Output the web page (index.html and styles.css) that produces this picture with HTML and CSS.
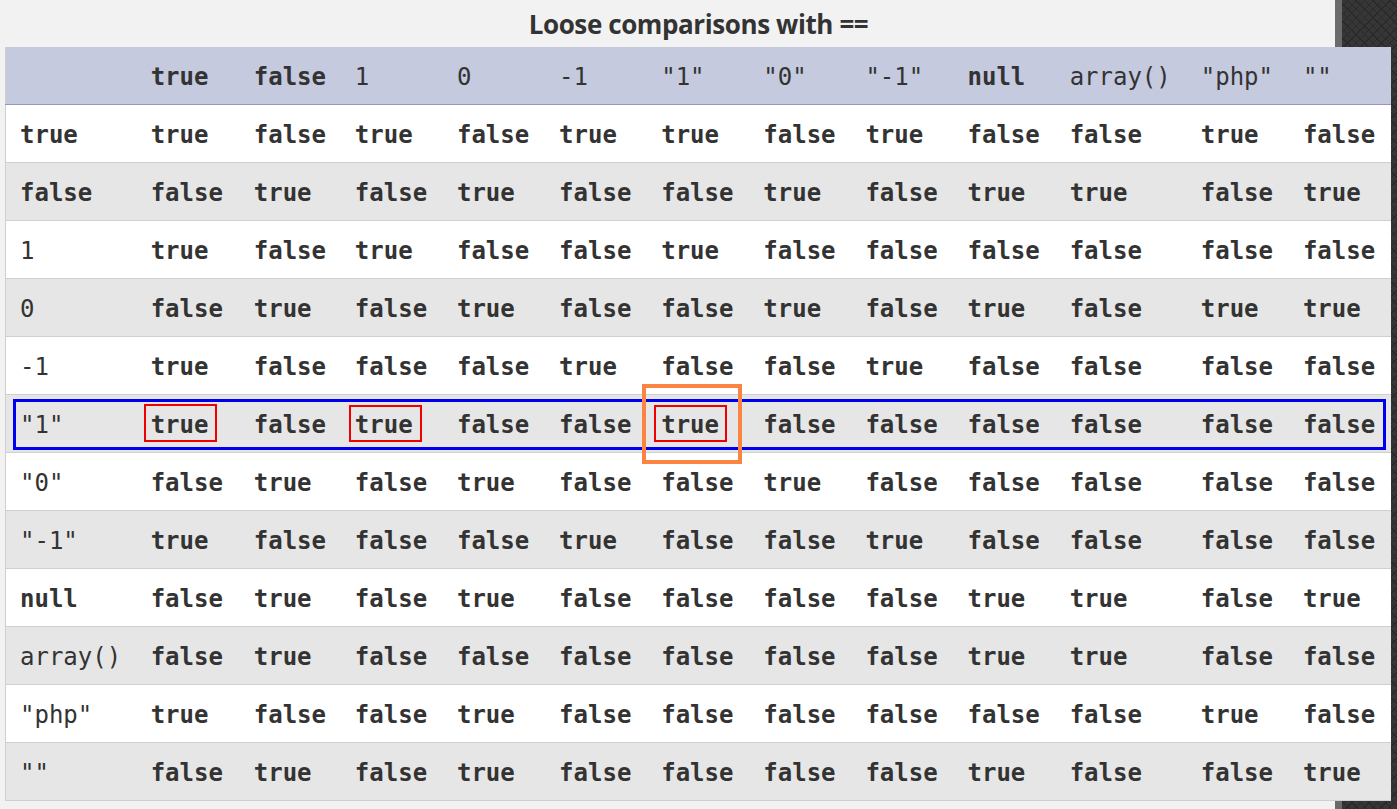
FILE: index.html
```html
<!DOCTYPE html>
<html>
<head>
<meta charset="utf-8">
<link rel="stylesheet" href="styles.css">
</head>
<body>
<div class="page">
  <h1 class="title">Loose comparisons with ==</h1>
  <table class="cmp">
    <colgroup>
      <col class="c-wide"><col class="c1"><col class="c2"><col class="c3"><col class="c"><col class="c"><col class="c"><col class="c"><col class="c"><col class="c"><col class="c-wide"><col class="c"><col class="c">
    </colgroup>
    <thead>
      <tr>
        <th></th><th class="kw">true</th><th class="kw">false</th><th>1</th><th>0</th><th>-1</th><th>"1"</th><th>"0"</th><th>"-1"</th><th class="kw">null</th><th>array()</th><th>"php"</th><th>""</th>
      </tr>
    </thead>
    <tbody>
      <tr><th class="kw">true</th><td>true</td><td>false</td><td>true</td><td>false</td><td>true</td><td>true</td><td>false</td><td>true</td><td>false</td><td>false</td><td>true</td><td>false</td></tr>
      <tr><th class="kw">false</th><td>false</td><td>true</td><td>false</td><td>true</td><td>false</td><td>false</td><td>true</td><td>false</td><td>true</td><td>true</td><td>false</td><td>true</td></tr>
      <tr><th>1</th><td>true</td><td>false</td><td>true</td><td>false</td><td>false</td><td>true</td><td>false</td><td>false</td><td>false</td><td>false</td><td>false</td><td>false</td></tr>
      <tr><th>0</th><td>false</td><td>true</td><td>false</td><td>true</td><td>false</td><td>false</td><td>true</td><td>false</td><td>true</td><td>false</td><td>true</td><td>true</td></tr>
      <tr><th>-1</th><td>true</td><td>false</td><td>false</td><td>false</td><td>true</td><td>false</td><td>false</td><td>true</td><td>false</td><td>false</td><td>false</td><td>false</td></tr>
      <tr><th>"1"</th><td>true</td><td>false</td><td>true</td><td>false</td><td>false</td><td>true</td><td>false</td><td>false</td><td>false</td><td>false</td><td>false</td><td>false</td></tr>
      <tr><th>"0"</th><td>false</td><td>true</td><td>false</td><td>true</td><td>false</td><td>false</td><td>true</td><td>false</td><td>false</td><td>false</td><td>false</td><td>false</td></tr>
      <tr><th>"-1"</th><td>true</td><td>false</td><td>false</td><td>false</td><td>true</td><td>false</td><td>false</td><td>true</td><td>false</td><td>false</td><td>false</td><td>false</td></tr>
      <tr><th class="kw">null</th><td>false</td><td>true</td><td>false</td><td>true</td><td>false</td><td>false</td><td>false</td><td>false</td><td>true</td><td>true</td><td>false</td><td>true</td></tr>
      <tr><th>array()</th><td>false</td><td>true</td><td>false</td><td>false</td><td>false</td><td>false</td><td>false</td><td>false</td><td>true</td><td>true</td><td>false</td><td>false</td></tr>
      <tr><th>"php"</th><td>true</td><td>false</td><td>false</td><td>true</td><td>false</td><td>false</td><td>false</td><td>false</td><td>false</td><td>false</td><td>true</td><td>false</td></tr>
      <tr><th>""</th><td>false</td><td>true</td><td>false</td><td>true</td><td>false</td><td>false</td><td>false</td><td>false</td><td>true</td><td>false</td><td>false</td><td>true</td></tr>
    </tbody>
  </table>
  <div class="mark row-mark"></div>
  <div class="mark cell-mark m1"></div>
  <div class="mark cell-mark m2"></div>
  <div class="mark cell-mark m3"></div>
  <div class="mark focus-mark"></div>
</div>
</body>
</html>
```

FILE: styles.css
```css
html, body {
  margin: 0;
  padding: 0;
  height: 100%;
}

body {
  background:
    linear-gradient(#f2f2f2, #f2f2f2) 0 0 / 1335px 100% no-repeat,
    linear-gradient(#6b6b6b, #6b6b6b) 1335px 0 / 7px 100% no-repeat,
    repeating-linear-gradient(45deg, #2a2a2a 0 1px, transparent 1px 6px),
    repeating-linear-gradient(-45deg, #2a2a2a 0 1px, transparent 1px 6px),
    #363636;
  color: #333;
  overflow: hidden;
}

.page {
  position: relative;
  width: 1397px;
}

.title {
  margin: 0;
  height: 47px;
  line-height: 49px;
  text-align: center;
  font-family: "Open Sans", "Liberation Sans", sans-serif;
  font-weight: 700;
  font-size: 26px;
  letter-spacing: -0.4px;
  color: #333;
}

.cmp {
  margin-left: 5px;
  width: 1386px;
  table-layout: fixed;
  border-collapse: collapse;
  font-family: "DejaVu Sans Mono", "Liberation Mono", monospace;
  font-size: 24px;
  color: #333;
}

.c-wide { width: 131px; }
.c1 { width: 103px; }
.c2 { width: 101px; }
.c3 { width: 102px; }
.c { width: 102px; }

.cmp th,
.cmp td {
  height: 55px;
  padding: 2px 0 0 14px;
  text-align: left;
  vertical-align: middle;
  white-space: nowrap;
  overflow: hidden;
  border-bottom: 1px solid #cfcfcf;
}

.cmp th { font-weight: 400; }
.cmp th.kw, .cmp td { font-weight: 700; }

.cmp thead tr { background: #c5cadf; }
.cmp thead th { border-bottom: 1px solid #8f98c4; }

.cmp tbody tr:nth-child(odd) { background: #ffffff; }
.cmp tbody tr:nth-child(even) { background: #e6e6e6; }

.cmp tbody th:first-child,
.cmp thead th:first-child { border-left: 1px solid #cfcfcf; }

.mark {
  position: absolute;
  box-sizing: border-box;
  pointer-events: none;
}

.row-mark {
  left: 13px;
  top: 399px;
  width: 1373px;
  height: 51px;
  border: 3px solid #0000f0;
}

.cell-mark {
  top: 404px;
  width: 73px;
  height: 38px;
  border: 2px solid #f00000;
}
.m1 { left: 144px; }
.m2 { left: 349px; top: 405px; height: 37px; }
.m3 { left: 654px; top: 405px; height: 37px; }

.focus-mark {
  left: 642px;
  top: 384px;
  width: 100px;
  height: 80px;
  border: 4px solid #fb8443;
}
```
